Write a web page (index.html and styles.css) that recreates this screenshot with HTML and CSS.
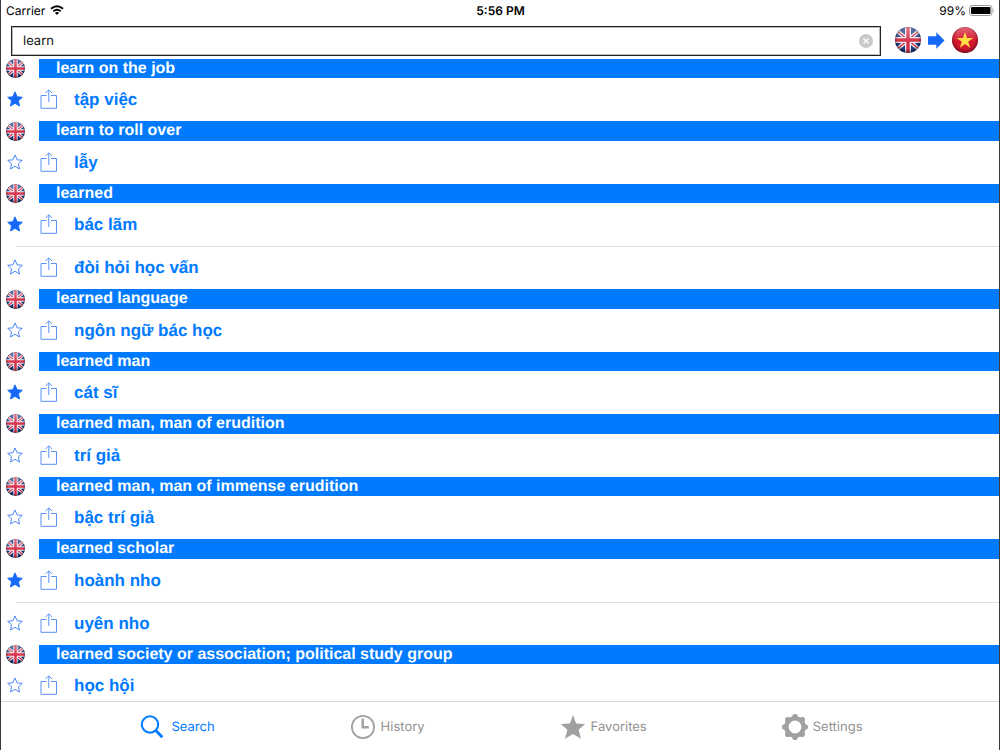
FILE: index.html
```html
<!DOCTYPE html>
<html lang="en">
<head>
<meta charset="utf-8">
<title>Dictionary</title>
<link rel="stylesheet" href="styles.css">
</head>
<body>
<svg class="defs" aria-hidden="true">
  <defs>
    <clipPath id="disc"><circle cx="13" cy="13" r="13"/></clipPath>
    <radialGradient id="shade" cx=".5" cy=".45" r=".58">
      <stop offset=".65" stop-color="#000" stop-opacity="0"/>
      <stop offset="1" stop-color="#000" stop-opacity=".5"/>
    </radialGradient>
    <linearGradient id="shine" x1="0" y1="0" x2="0" y2="1">
      <stop offset="0" stop-color="#fff" stop-opacity=".35"/>
      <stop offset=".55" stop-color="#fff" stop-opacity="0"/>
    </linearGradient>
  </defs>
  <symbol id="uk" viewBox="0 0 26 26">
    <g clip-path="url(#disc)">
      <rect width="26" height="26" fill="#1c3a82"/>
      <path d="M0 2 26 24M26 2 0 24" stroke="#f0f0f4" stroke-width="4"/>
      <path d="M0 2 26 24M26 2 0 24" stroke="#d8304a" stroke-width="1.4"/>
      <path d="M13 0V26M0 13H26" stroke="#f0f0f4" stroke-width="6"/>
      <path d="M13 0V26M0 13H26" stroke="#d8304a" stroke-width="3.4"/>
      <rect width="26" height="26" fill="url(#shine)"/>
      <rect width="26" height="26" fill="url(#shade)"/>
    </g>
  </symbol>
  <symbol id="vn" viewBox="0 0 26 26">
    <circle cx="13" cy="13" r="13" fill="#d5182f"/>
    <circle cx="13" cy="13" r="13" fill="url(#shine)"/>
    <circle cx="13" cy="13" r="13" fill="url(#shade)"/>
    <path d="M13 5 15 11H21.2L16.2 14.7 18.1 20.7 13 17 7.9 20.7 9.8 14.7 4.8 11H11Z" fill="#ffdf43"/>
  </symbol>
  <symbol id="star" viewBox="0 0 16 16">
    <path d="M8 .9 10.1 5.8 15.3 6.3 11.4 9.8 12.5 15 8 12.3 3.5 15 4.6 9.8.7 6.3 5.9 5.8Z"/>
  </symbol>
  <symbol id="share" viewBox="0 0 18 20">
    <path d="M6.5 6.5H1V19.3H16.5V6.5H11M8.8 13V1M5.6 4 8.8.8 12 4" fill="none" stroke="#5a92f8" stroke-width="1"/>
  </symbol>
</svg>

<div class="app">
  <header class="status">
    <div class="carrier">Carrier
      <svg class="wifi" viewBox="0 0 14 10" aria-hidden="true"><g fill="none" stroke="#000" stroke-width="2"><path d="M1 3.8Q7-1.2 13 3.8M3.3 6.2Q7 3.2 10.7 6.2"/></g><path d="M4.9 7.8Q7 6 9.1 7.8L7 10Z"/></svg>
    </div>
    <div class="time">5:56 PM</div>
    <div class="power">99%
      <svg class="battery" viewBox="0 0 26 11" aria-hidden="true"><rect x=".5" y=".5" width="22.5" height="10" rx="2.5" fill="#fff" stroke="#999"/><rect x="2" y="2" width="19.5" height="7" rx="1"/><path d="M24 3.7Q25.6 5.5 24 7.3Z" fill="#999"/></svg>
    </div>
  </header>

  <form class="searchbar">
    <div class="field">
      <input class="query" type="text" value="learn" aria-label="Search word">
      <button class="clear" type="button" aria-label="Clear"><svg viewBox="0 0 14 14"><circle cx="7" cy="7" r="7" fill="#c9c9cb"/><path d="M4.5 4.5 9.5 9.5M9.5 4.5 4.5 9.5" stroke="#fff" stroke-width="1.4"/></svg></button>
    </div>
    <button class="direction" type="button" aria-label="English to Vietnamese">
      <svg class="flag"><use href="#uk"/></svg>
      <svg class="arrow" viewBox="0 0 17 17"><path d="M0 4.2H8.3V.3L16.5 8.5 8.3 16.7V12.8H0Z" fill="#1669f7"/></svg>
      <svg class="flag"><use href="#vn"/></svg>
    </button>
  </form>

  <main class="results">
    <h2 class="term"><svg class="mark"><use href="#uk"/></svg><span class="word">learn on the job</span></h2>
    <div class="entry"><button class="fav on" aria-label="Remove favorite"><svg><use href="#star"/></svg></button><button class="share" aria-label="Share"><svg><use href="#share"/></svg></button><a class="meaning" href="#" lang="vi">tập việc</a></div>
    <h2 class="term"><svg class="mark"><use href="#uk"/></svg><span class="word">learn to roll over</span></h2>
    <div class="entry"><button class="fav" aria-label="Add favorite"><svg><use href="#star"/></svg></button><button class="share" aria-label="Share"><svg><use href="#share"/></svg></button><a class="meaning" href="#" lang="vi">lẫy</a></div>
    <h2 class="term"><svg class="mark"><use href="#uk"/></svg><span class="word">learned</span></h2>
    <div class="entry"><button class="fav on" aria-label="Remove favorite"><svg><use href="#star"/></svg></button><button class="share" aria-label="Share"><svg><use href="#share"/></svg></button><a class="meaning" href="#" lang="vi">bác lãm</a></div>
    <div class="entry"><button class="fav" aria-label="Add favorite"><svg><use href="#star"/></svg></button><button class="share" aria-label="Share"><svg><use href="#share"/></svg></button><a class="meaning" href="#" lang="vi">đòi hỏi học vấn</a></div>
    <h2 class="term"><svg class="mark"><use href="#uk"/></svg><span class="word">learned language</span></h2>
    <div class="entry"><button class="fav" aria-label="Add favorite"><svg><use href="#star"/></svg></button><button class="share" aria-label="Share"><svg><use href="#share"/></svg></button><a class="meaning" href="#" lang="vi">ngôn ngữ bác học</a></div>
    <h2 class="term"><svg class="mark"><use href="#uk"/></svg><span class="word">learned man</span></h2>
    <div class="entry"><button class="fav on" aria-label="Remove favorite"><svg><use href="#star"/></svg></button><button class="share" aria-label="Share"><svg><use href="#share"/></svg></button><a class="meaning" href="#" lang="vi">cát sĩ</a></div>
    <h2 class="term"><svg class="mark"><use href="#uk"/></svg><span class="word">learned man, man of erudition</span></h2>
    <div class="entry"><button class="fav" aria-label="Add favorite"><svg><use href="#star"/></svg></button><button class="share" aria-label="Share"><svg><use href="#share"/></svg></button><a class="meaning" href="#" lang="vi">trí giả</a></div>
    <h2 class="term"><svg class="mark"><use href="#uk"/></svg><span class="word">learned man, man of immense erudition</span></h2>
    <div class="entry"><button class="fav" aria-label="Add favorite"><svg><use href="#star"/></svg></button><button class="share" aria-label="Share"><svg><use href="#share"/></svg></button><a class="meaning" href="#" lang="vi">bậc trí giả</a></div>
    <h2 class="term"><svg class="mark"><use href="#uk"/></svg><span class="word">learned scholar</span></h2>
    <div class="entry"><button class="fav on" aria-label="Remove favorite"><svg><use href="#star"/></svg></button><button class="share" aria-label="Share"><svg><use href="#share"/></svg></button><a class="meaning" href="#" lang="vi">hoành nho</a></div>
    <div class="entry"><button class="fav" aria-label="Add favorite"><svg><use href="#star"/></svg></button><button class="share" aria-label="Share"><svg><use href="#share"/></svg></button><a class="meaning" href="#" lang="vi">uyên nho</a></div>
    <h2 class="term"><svg class="mark"><use href="#uk"/></svg><span class="word">learned society or association; political study group</span></h2>
    <div class="entry"><button class="fav" aria-label="Add favorite"><svg><use href="#star"/></svg></button><button class="share" aria-label="Share"><svg><use href="#share"/></svg></button><a class="meaning" href="#" lang="vi">học hội</a></div>
  </main>

  <nav class="tabs">
    <a class="tab active" href="#"><svg viewBox="0 0 26 26"><circle cx="10" cy="10.5" r="8.2" fill="none" stroke="currentColor" stroke-width="2"/><path d="M15.6 16.3 22.3 23.2" stroke="currentColor" stroke-width="2.8"/></svg>Search</a>
    <a class="tab" href="#"><svg viewBox="0 0 26 26"><circle cx="13" cy="13" r="11.1" fill="none" stroke="currentColor" stroke-width="1.8"/><path d="M12.7 4.6V13.2H18.8" fill="none" stroke="currentColor" stroke-width="2.4"/></svg>History</a>
    <a class="tab" href="#"><svg viewBox="0 0 26 26"><path d="M13 1 16.1 9.6 25.2 10 18.6 15.8 21 24.8 13 20 5 24.8 7.4 15.8.8 10 9.9 9.6Z" fill="currentColor"/></svg>Favorites</a>
    <a class="tab" href="#"><svg viewBox="0 0 26 26"><circle cx="13" cy="13" r="8.6" fill="none" stroke="currentColor" stroke-width="4.4"/><g fill="currentColor"><circle cx="13" cy="2.8" r="2.8"/><circle cx="20.2" cy="5.8" r="2.8"/><circle cx="23.2" cy="13" r="2.8"/><circle cx="20.2" cy="20.2" r="2.8"/><circle cx="13" cy="23.2" r="2.8"/><circle cx="5.8" cy="20.2" r="2.8"/><circle cx="2.8" cy="13" r="2.8"/><circle cx="5.8" cy="5.8" r="2.8"/></g></svg>Settings</a>
  </nav>
</div>
</body>
</html>
```
FILE: styles.css
```css
* { box-sizing: border-box; }
body { margin: 0; font-family: Inter, "Liberation Sans", sans-serif; background: #fff; color: #000; text-rendering: geometricPrecision; }
button { border: 0; padding: 0; background: none; display: flex; }
a { text-decoration: none; }
.defs { position: absolute; width: 0; height: 0; }

.app { display: flex; flex-direction: column; height: 100vh; border: solid #3c3c3e; border-width: 0 1px; overflow: hidden; }

.status { display: grid; grid-template-columns: 1fr auto 1fr; align-items: center; height: 20px; padding: 0 4px 0 5px; font-size: 12px; flex: none; }
.carrier, .power { display: flex; align-items: center; gap: 5px; }
.power { justify-content: flex-end; gap: 3px; }
.time { font-weight: 600; }
.wifi { width: 14px; height: 10px; }
.battery { width: 26px; height: 11px; }

.searchbar { display: flex; align-items: flex-start; gap: 14px; padding: 6px 21px 3px 10px; flex: none; }
.field { display: flex; align-items: center; flex: 1; height: 30px; padding: 0 7px 0 11px; border: 1px solid #222; outline: 1px solid #bbb; outline-offset: -2px; }
.query { flex: 1; min-width: 0; border: 0; padding: 0; outline: 0; font: 13px Inter, "Liberation Sans", sans-serif; color: #111; background: none; text-rendering: inherit; }
.clear svg { width: 14px; height: 14px; }
.direction { align-items: center; gap: 7px; height: 28px; }
.flag { width: 26px; height: 26px; }
.arrow { width: 17px; height: 17px; }

/* The last entry runs on beneath the tab bar. */
.results { display: flex; flex-direction: column; flex: 1; min-height: 0; margin-bottom: -6px; font-family: "Liberation Sans", Arial, sans-serif; }
.term { display: flex; align-items: center; gap: 14px; flex: 1 1 19px; min-height: 0; margin: 0; padding-left: 5px; font-size: 16px; line-height: 20px; }
.mark { width: 19px; height: 19px; }
.word { flex: 1; align-self: stretch; padding-left: 17px; background: #007aff; color: #fff; }
.entry { display: flex; align-items: center; flex: none; height: 43px; padding: 0 0 1px 6px; }
.entry + .entry { background: linear-gradient(#e0e0e2, #e0e0e2) 15px 0 / 100% 1px no-repeat; }
.fav svg { width: 16px; height: 16px; fill: none; stroke: #4d88f7; }
.fav.on svg { fill: #1669f7; stroke: #1669f7; }
.share { margin-left: 17px; }
.share svg { width: 18px; height: 20px; }
.meaning { margin-left: 16px; padding-top: 2px; color: #007aff; font-size: 17px; font-weight: bold; }

.tabs { position: relative; display: flex; justify-content: center; gap: 135px; flex: none; height: 49px; padding: 1px 0 0 3px; border-top: 1px solid #d8d8da; background: #fff; }
.tab { display: flex; align-items: center; gap: 5px; color: #929292; font-size: 13px; }
.tab svg { width: 26px; height: 26px; color: #a0a0a0; }
.tab.active, .tab.active svg { color: #007aff; }
```
